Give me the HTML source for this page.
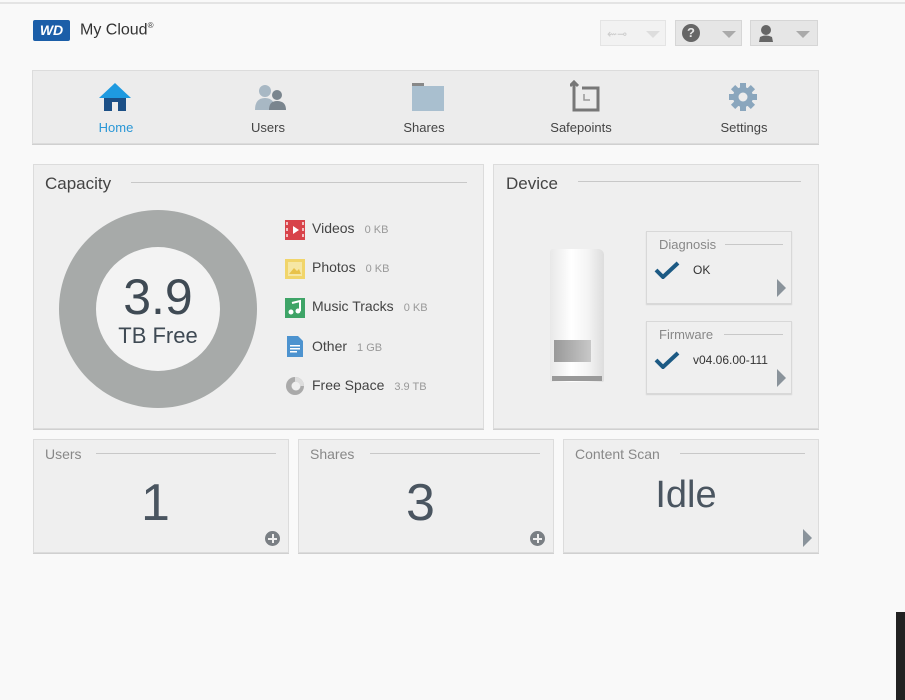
<!DOCTYPE html>
<html><head><meta charset="utf-8"><style>
*{margin:0;padding:0;box-sizing:border-box}
body{width:905px;height:700px;background:#f9f9f9;font-family:"Liberation Sans",sans-serif;position:relative;overflow:hidden;color:#333}
.a{position:absolute}
.panel{position:absolute;background:#efefef;border:1px solid #dcdcdc;box-shadow:0 1px 0 #d0d0d0}
.ttl{position:absolute;font-size:17px;color:#444}
.line{position:absolute;height:1px;background:#c8c8c8}
.nav{position:absolute;top:120px;font-size:13px;color:#444;text-align:center;width:100px}
.leg{position:absolute;left:312px;font-size:14px;color:#444}
.leg span{font-size:11px;color:#999;margin-left:10px}
.btn{position:absolute;top:20px;height:26px;border:1px solid #d6d6d6;background:#e6e6e6}
.tri{position:absolute;width:0;height:0;border-left:7px solid transparent;border-right:7px solid transparent;border-top:7px solid #aaa}
.sub{position:absolute;background:#efefef;border:1px solid #d8d8d8;box-shadow:0 1px 1px #d4d4d4}
.arr{position:absolute;width:0;height:0;border-top:9px solid transparent;border-bottom:9px solid transparent;border-left:9px solid #8a939b}
.plus{position:absolute;width:15px;height:15px;border-radius:50%;background:#7a7f84}
.plus:before{content:"";position:absolute;left:3px;top:6.5px;width:9px;height:2px;background:#efefef}
.plus:after{content:"";position:absolute;left:6.5px;top:3px;width:2px;height:9px;background:#efefef}
.big{position:absolute;font-size:52px;color:#4a5560;text-align:center}
</style></head><body>
<div class="a" style="left:0;top:2px;width:905px;height:2px;background:#e4e4e4"></div>
<div class="a" style="left:33px;top:20px;width:37px;height:21px;background:#1b5ea8;border-radius:2px;color:#fff;font-weight:bold;font-style:italic;font-size:14px;text-align:center;line-height:21px">WD</div>
<div class="a" style="left:80px;top:21px;font-size:16px;color:#333">My Cloud<sup style="font-size:8px">®</sup></div>
<div class="btn" style="left:600px;width:66px;background:#f2f2f2;border-color:#e4e4e4"><div class="a" style="left:6px;top:6px;color:#ccc;font-size:12px">⇜⊸</div><div class="tri" style="left:45px;top:10px;border-top-color:#ddd"></div></div>
<div class="btn" style="left:675px;width:67px"><div class="a" style="left:6px;top:3px;width:18px;height:18px;border-radius:50%;background:#666;color:#e6e6e6;font-weight:bold;font-size:13px;text-align:center;line-height:18px">?</div><div class="tri" style="left:46px;top:10px"></div></div>
<div class="btn" style="left:750px;width:68px"><svg class="a" style="left:6px;top:3px" width="18" height="19"><circle cx="9" cy="6" r="5" fill="#666"/><path d="M2 18 L3 13 Q9 10 15 13 L16 18Z" fill="#666"/></svg><div class="tri" style="left:45px;top:10px"></div></div>

<div class="panel" style="left:32px;top:70px;width:787px;height:74px;background:#ececec"></div>
<svg class="a" style="left:97px;top:82px" width="36" height="30"><path d="M18 1 L34 16 L2 16Z" fill="#1e9ae0"/><rect x="7" y="16" width="22" height="13" fill="#1b4f86"/><rect x="15" y="20" width="6" height="9" fill="#ececec"/></svg>
<svg class="a" style="left:253px;top:83px" width="36" height="28"><circle cx="12" cy="8" r="6" fill="#a8b8c4"/><path d="M2 27 Q2 15 12 15 Q22 15 22 27Z" fill="#a8b8c4"/><circle cx="24" cy="12" r="5" fill="#7a858e"/><path d="M16 27 Q16 18 24 18 Q33 18 33 27Z" fill="#7a858e"/></svg>
<svg class="a" style="left:411px;top:82px" width="34" height="30"><rect x="1" y="1" width="12" height="5" fill="#888"/><rect x="1" y="4" width="32" height="25" fill="#a9bfcf"/></svg>
<svg class="a" style="left:570px;top:80px" width="32" height="32"><path d="M4 10 V30 H28 V8 H12" fill="none" stroke="#777" stroke-width="3"/><path d="M4 2 L4 14 M0 6 L4 2 L8 6" fill="none" stroke="#777" stroke-width="3"/><path d="M14 14 V20 H20" fill="none" stroke="#999" stroke-width="1.5"/></svg>
<svg class="a" style="left:728px;top:82px" width="30" height="30"><g fill="#8aa6bd"><circle cx="15" cy="15" r="10"/><rect x="12" y="1" width="6" height="28"/><rect x="1" y="12" width="28" height="6"/><rect x="12" y="1" width="6" height="28" transform="rotate(45 15 15)"/><rect x="12" y="1" width="6" height="28" transform="rotate(-45 15 15)"/></g><circle cx="15" cy="15" r="4.5" fill="#ececec"/></svg>
<div class="nav" style="left:66px;color:#2a97d6">Home</div>
<div class="nav" style="left:218px">Users</div>
<div class="nav" style="left:374px">Shares</div>
<div class="nav" style="left:531px">Safepoints</div>
<div class="nav" style="left:694px">Settings</div>

<div class="panel" style="left:33px;top:164px;width:451px;height:265px"></div>
<div class="ttl" style="left:45px;top:174px">Capacity</div>
<div class="line" style="left:131px;top:182px;width:336px"></div>
<div class="a" style="left:59px;top:210px;width:198px;height:198px;border-radius:50%;background:#a7aaa9"></div>
<div class="a" style="left:96px;top:247px;width:124px;height:124px;border-radius:50%;background:#f3f3f3"></div>
<div class="a" style="left:96px;top:272px;width:124px;text-align:center;font-size:50px;color:#3f4a54;line-height:50px">3.9</div>
<div class="a" style="left:96px;top:323px;width:124px;text-align:center;font-size:22px;color:#3f4a54">TB Free</div>

<svg class="a" style="left:285px;top:220px" width="20" height="20"><rect width="20" height="20" fill="#d8434a"/><g fill="#f3c0c2"><rect x="1" y="2" width="2" height="3"/><rect x="1" y="8" width="2" height="3"/><rect x="1" y="14" width="2" height="3"/><rect x="17" y="2" width="2" height="3"/><rect x="17" y="8" width="2" height="3"/><rect x="17" y="14" width="2" height="3"/></g><path d="M8 6 L14 10 L8 14Z" fill="#fff"/></svg>
<svg class="a" style="left:285px;top:259px" width="20" height="20"><rect width="20" height="20" fill="#f1d56a"/><rect x="3" y="3" width="14" height="14" fill="#f6e7a4"/><path d="M4 15 L9 9 L12 12 L14 10 L16 15Z" fill="#e8c24a"/></svg>
<svg class="a" style="left:285px;top:298px" width="20" height="20"><rect width="20" height="20" fill="#3ea467"/><path d="M7 5 L15 3 V13" stroke="#fff" stroke-width="2" fill="none"/><circle cx="6" cy="14" r="2.5" fill="#fff"/><circle cx="13" cy="13" r="2.5" fill="#fff"/></svg>
<svg class="a" style="left:287px;top:336px" width="16" height="21"><path d="M0 0 H11 L16 5 V21 H0Z" fill="#4d93cf"/><g fill="#fff"><rect x="3" y="9" width="10" height="1.5"/><rect x="3" y="12" width="10" height="1.5"/><rect x="3" y="15" width="7" height="1.5"/></g></svg>
<svg class="a" style="left:285px;top:376px" width="20" height="20"><circle cx="10" cy="10" r="9" fill="#aaa"/><circle cx="11" cy="10" r="4.5" fill="#efefef"/><path d="M10 1 A9 9 0 0 1 19 10 L10 10Z" fill="#ddd"/><circle cx="11" cy="10" r="4" fill="#efefef"/></svg>
<div class="leg" style="top:220px">Videos<span>0 KB</span></div>
<div class="leg" style="top:259px">Photos<span>0 KB</span></div>
<div class="leg" style="top:298px">Music Tracks<span>0 KB</span></div>
<div class="leg" style="top:338px">Other<span>1 GB</span></div>
<div class="leg" style="top:377px">Free Space<span>3.9 TB</span></div>

<div class="panel" style="left:493px;top:164px;width:326px;height:265px"></div>
<div class="ttl" style="left:506px;top:174px">Device</div>
<div class="line" style="left:578px;top:181px;width:223px"></div>
<div class="a" style="left:550px;top:249px;width:54px;height:133px;background:linear-gradient(90deg,#e8e8e8,#fff 40%,#f4f4f4 70%,#ddd);border-radius:3px 6px 2px 2px"></div>
<div class="a" style="left:554px;top:340px;width:37px;height:22px;background:linear-gradient(90deg,#999,#c8c8c8)"></div>
<div class="a" style="left:552px;top:376px;width:50px;height:5px;background:#999"></div>
<div class="sub" style="left:646px;top:231px;width:146px;height:73px"></div>
<div class="a" style="left:659px;top:237px;font-size:13px;color:#888">Diagnosis</div>
<div class="line" style="left:725px;top:244px;width:58px"></div>
<svg class="a" style="left:654px;top:261px" width="26" height="18"><path d="M2 9 L9 16 L24 2" stroke="#1c5a84" stroke-width="4" fill="none"/></svg>
<div class="a" style="left:693px;top:263px;font-size:12px;color:#333">OK</div>
<div class="arr" style="left:777px;top:279px"></div>
<div class="sub" style="left:646px;top:321px;width:146px;height:73px"></div>
<div class="a" style="left:659px;top:327px;font-size:13px;color:#888">Firmware</div>
<div class="line" style="left:724px;top:334px;width:59px"></div>
<svg class="a" style="left:654px;top:351px" width="26" height="18"><path d="M2 9 L9 16 L24 2" stroke="#1c5a84" stroke-width="4" fill="none"/></svg>
<div class="a" style="left:693px;top:353px;font-size:12px;color:#333">v04.06.00-111</div>
<div class="arr" style="left:777px;top:369px"></div>

<div class="panel" style="left:33px;top:439px;width:256px;height:114px"></div>
<div class="a" style="left:45px;top:446px;font-size:14px;color:#888">Users</div>
<div class="line" style="left:96px;top:453px;width:180px"></div>
<div class="big" style="left:33px;top:473px;width:245px">1</div>
<div class="plus" style="left:265px;top:531px"></div>
<div class="panel" style="left:298px;top:439px;width:256px;height:114px"></div>
<div class="a" style="left:310px;top:446px;font-size:14px;color:#888">Shares</div>
<div class="line" style="left:370px;top:453px;width:170px"></div>
<div class="big" style="left:298px;top:473px;width:245px">3</div>
<div class="plus" style="left:530px;top:531px"></div>
<div class="panel" style="left:563px;top:439px;width:256px;height:114px"></div>
<div class="a" style="left:575px;top:446px;font-size:14px;color:#888">Content Scan</div>
<div class="line" style="left:680px;top:453px;width:125px"></div>
<div class="a" style="left:563px;top:474px;width:246px;text-align:center;font-size:38px;color:#4a5560">Idle</div>
<div class="arr" style="left:803px;top:529px"></div>

<div class="a" style="left:896px;top:612px;width:9px;height:88px;background:#222"></div>
</body></html>
